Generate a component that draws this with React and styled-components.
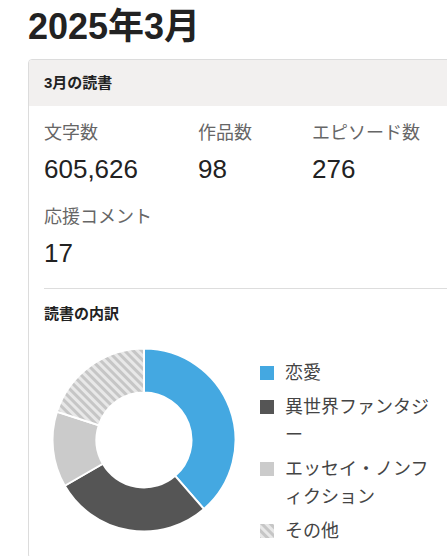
import React from "react";
import styled, { createGlobalStyle } from "styled-components";

const GlobalStyle = createGlobalStyle`
	html, body {
		margin: 0;
		padding: 0;
		overflow: hidden;
		background: #ffffff;
	}
	body {
		font-family: "Liberation Sans", "Noto Sans CJK JP", sans-serif;
		color: #222222;
	}
`;

const stats = [
	{ label: "文字数", value: "605,626" },
	{ label: "作品数", value: "98" },
	{ label: "エピソード数", value: "276" },
	{ label: "応援コメント", value: "17" },
];

// degrees, clockwise from 12 o'clock
const genres = [
	{ name: "恋愛", deg: 139, fill: "#44a8e1" },
	{ name: "異世界ファンタジー", deg: 101, fill: "#555555" },
	{ name: "エッセイ・ノンフィクション", deg: 48, fill: "#cbcbcb" },
	{ name: "その他", deg: 72, fill: "url(#stripes)", striped: true },
];

function point(cx, cy, r, deg) {
	const a = ((deg - 90) * Math.PI) / 180;
	return [cx + r * Math.cos(a), cy + r * Math.sin(a)];
}

function arcPath(cx, cy, r1, r2, start, end) {
	const large = end - start > 180 ? 1 : 0;
	const [ox1, oy1] = point(cx, cy, r2, start);
	const [ox2, oy2] = point(cx, cy, r2, end);
	const [ix1, iy1] = point(cx, cy, r1, end);
	const [ix2, iy2] = point(cx, cy, r1, start);
	return `M${ox1} ${oy1} A${r2} ${r2} 0 ${large} 1 ${ox2} ${oy2} L${ix1} ${iy1} A${r1} ${r1} 0 ${large} 0 ${ix2} ${iy2} Z`;
}

function Stripes({ id }) {
	return (
		<pattern
			id={id}
			patternUnits="userSpaceOnUse"
			width="6"
			height="6"
			patternTransform="rotate(-45)"
		>
			<rect width="6" height="6" fill="#e8e8e8" />
			<rect width="3" height="6" fill="#c6c6c6" />
		</pattern>
	);
}

function Donut() {
	let acc = 0;
	return (
		<ChartSvg width="200" height="200" viewBox="0 0 200 200">
			<defs>
				<Stripes id="stripes" />
			</defs>
			{genres.map((g) => {
				const start = acc;
				acc += g.deg;
				return (
					<path
						key={g.name}
						d={arcPath(100, 100, 47.5, 91.5, start, acc)}
						fill={g.fill}
						stroke="#ffffff"
						strokeWidth="2"
					/>
				);
			})}
		</ChartSvg>
	);
}

function Swatch({ fill, striped }) {
	return (
		<SwatchSvg width="14" height="14" viewBox="0 0 14 14">
			{striped && (
				<defs>
					<Stripes id="stripes-swatch" />
				</defs>
			)}
			<rect
				width="14"
				height="14"
				fill={striped ? "url(#stripes-swatch)" : fill}
			/>
		</SwatchSvg>
	);
}

function App() {
	return (
		<Page>
			<GlobalStyle />
			<Title>2025年3月</Title>
			<Card>
				<CardHeader>3月の読書</CardHeader>
				<StatGrid>
					{stats.map((s) => (
						<Stat key={s.label}>
							<StatLabel>{s.label}</StatLabel>
							<StatValue>{s.value}</StatValue>
						</Stat>
					))}
				</StatGrid>
				<Divider />
				<Breakdown>
					<SectionTitle>読書の内訳</SectionTitle>
					<ChartRow>
						<Donut />
						<Legend>
							{genres.map((g) => (
								<LegendItem key={g.name}>
									<Swatch fill={g.fill} striped={g.striped} />
									<LegendText>{g.name}</LegendText>
								</LegendItem>
							))}
						</Legend>
					</ChartRow>
				</Breakdown>
			</Card>
		</Page>
	);
}

const Page = styled.main`
	padding: 5px 0 0 28px;
	width: 560px;
`;

const Title = styled.h1`
	margin: 0 0 10px;
	font-size: 36px;
	line-height: 44px;
	font-weight: 700;
	color: #222222;
`;

const Card = styled.section`
	width: 520px;
	border: 1px solid #dcdcdc;
	border-radius: 4px;
	overflow: hidden;
	background: #ffffff;
`;

const CardHeader = styled.h2`
	margin: 0;
	padding: 0 15px;
	height: 46px;
	line-height: 46px;
	font-size: 15px;
	font-weight: 700;
	background: #f2f0ef;
	color: #222222;
`;

const StatGrid = styled.div`
	display: flex;
	flex-wrap: wrap;
	column-gap: 60px;
	row-gap: 18px;
	padding: 14px 15px 18px;
`;

const Stat = styled.div`
	display: flex;
	flex-direction: column;
`;

const StatLabel = styled.span`
	font-size: 18px;
	line-height: 26px;
	color: #666666;
	margin-bottom: 6px;
	white-space: nowrap;
`;

const StatValue = styled.span`
	font-size: 26px;
	line-height: 34px;
	color: #222222;
`;

const Divider = styled.hr`
	margin: 0 15px;
	border: none;
	border-top: 1px solid #dddddd;
`;

const Breakdown = styled.div`
	padding: 14px 15px 13px;
`;

const SectionTitle = styled.h3`
	margin: 0 0 15px;
	font-size: 15px;
	line-height: 22px;
	font-weight: 700;
	color: #222222;
`;

const ChartRow = styled.div`
	display: flex;
	align-items: flex-start;
	gap: 16px;
`;

const ChartSvg = styled.svg`
	display: block;
	flex: none;
`;

const Legend = styled.ul`
	list-style: none;
	margin: 19px 0 0;
	padding: 0;
	display: flex;
	flex-direction: column;
	gap: 6px;
	width: 176px;
`;

const LegendItem = styled.li`
	display: flex;
	align-items: flex-start;
	gap: 11px;
`;

const SwatchSvg = styled.svg`
	display: block;
	flex: none;
	margin-top: 7px;
`;

const LegendText = styled.span`
	width: 150px;
	font-size: 18px;
	line-height: 28px;
	color: #444444;
	line-break: loose;
`;

export default App;
